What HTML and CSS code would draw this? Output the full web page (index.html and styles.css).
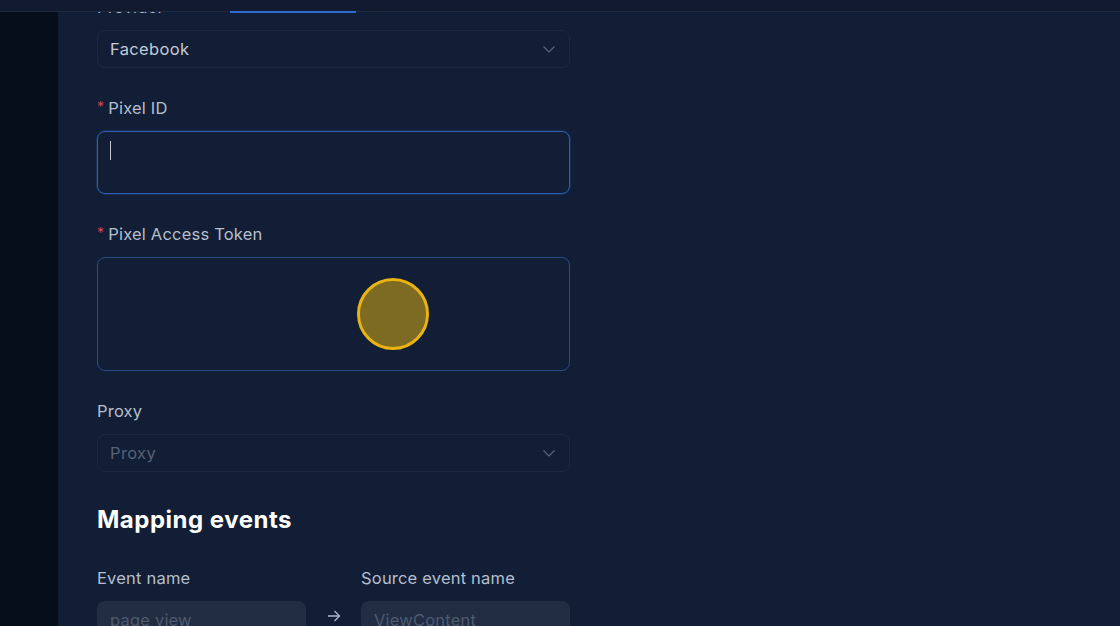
FILE: index.html
```html
<!DOCTYPE html>
<html lang="en">
<head>
<meta charset="utf-8">
<title>Pixel settings</title>
<link rel="stylesheet" href="styles.css">
</head>
<body>
<div class="app">
  <header class="topbar">
    <div class="tabs">
      <span class="tab"></span>
      <span class="tab active"></span>
    </div>
  </header>
  <div class="body">
    <aside class="sidebar"></aside>
    <main class="main">
      <form class="form">
        <div class="field">
          <label class="label">Provider</label>
          <div class="select">
            <span class="value">Facebook</span>
            <svg class="chev" viewBox="0 0 12 7" width="12" height="7"><polyline points="0.5,0.5 6,6 11.5,0.5" /></svg>
          </div>
        </div>
        <div class="field">
          <label class="label"><span class="req">*</span>Pixel ID</label>
          <div class="input focus"><span class="caret"></span></div>
        </div>
        <div class="field">
          <label class="label"><span class="req">*</span>Pixel Access Token</label>
          <div class="textarea">
            <span class="click"></span>
          </div>
        </div>
        <div class="field">
          <label class="label">Proxy</label>
          <div class="select">
            <span class="value placeholder">Proxy</span>
            <svg class="chev" viewBox="0 0 12 7" width="12" height="7"><polyline points="0.5,0.5 6,6 11.5,0.5" /></svg>
          </div>
        </div>
        <h2 class="heading">Mapping events</h2>
        <div class="mapping">
          <label class="label">Event name</label>
          <span></span>
          <label class="label">Source event name</label>
          <div class="filled">page view</div>
          <div class="arrow">
            <svg viewBox="0 0 14 12" width="14" height="12"><path d="M1 6 H12.5 M7.5 1 L12.5 6 L7.5 11" /></svg>
          </div>
          <div class="filled">ViewContent</div>
        </div>
      </form>
    </main>
  </div>
</div>
</body>
</html>
```
FILE: styles.css
```css
* { box-sizing: border-box; }
html, body { margin: 0; padding: 0; }
body {
  background: #121e36;
  font-family: "Inter", "Open Sans", sans-serif;
  color: #b9c1ce;
}
.app {
  width: 1120px;
  height: 626px;
  overflow: hidden;
  display: grid;
  grid-template-rows: 12px 1fr;
}
.topbar {
  background: #111a2e;
  border-bottom: 1px solid #1e2a41;
  position: relative;
  z-index: 2;
}
.tabs {
  display: flex;
  height: 100%;
  padding-left: 230px;
}
.tab.active {
  width: 126px;
  height: 13px;
  border-bottom: 2px solid #2d6bd1;
}
.body {
  display: grid;
  grid-template-columns: 59px 1fr;
  min-height: 0;
}
.sidebar {
  background: #060d1b;
  border-right: 1px solid #101a2c;
}
.main {
  overflow: hidden;
  padding-left: 38px;
}
.form {
  width: 473px;
  margin-top: -16px;
}
.field { margin-bottom: 29px; }
.label {
  display: block;
  font-size: 16.5px;
  line-height: 22px;
  height: 22px;
  margin-bottom: 12px;
  color: #b6bfcd;
  letter-spacing: 0.2px;
}
.req {
  color: #d9434f;
  font-size: 14px;
  line-height: 0;
  margin-right: 4px;
  vertical-align: 2px;
}
.select {
  height: 38px;
  border: 1px solid #1c2840;
  border-radius: 8px;
  display: flex;
  align-items: center;
  justify-content: space-between;
  padding: 0 14px 0 12px;
}
.value {
  font-size: 16.5px;
  color: #c4cbd7;
  letter-spacing: 0.35px;
}
.value.placeholder { color: #566275; }
.chev polyline {
  fill: none;
  stroke: #5b687d;
  stroke-width: 1.1;
}
.input {
  height: 63px;
  border-radius: 8px;
  border: 1px solid #2c5fb3;
  box-shadow: 0 0 0 1px rgba(44, 95, 179, 0.25);
  padding: 9px 12px;
}
.caret {
  display: block;
  width: 1px;
  height: 19px;
  background: #c3cad6;
}
.textarea {
  position: relative;
  height: 114px;
  border-radius: 8px;
  border: 1px solid #2b4c80;
}
.click {
  position: absolute;
  left: 259px;
  top: 20px;
  width: 72px;
  height: 72px;
  border-radius: 50%;
  border: 3px solid #e9b312;
  background: #7d6b23;
}
.heading {
  margin: 33px 0 32px;
  font-size: 24px;
  line-height: 30px;
  font-weight: 700;
  color: #ffffff;
  letter-spacing: 0.5px;
}
.mapping {
  display: grid;
  grid-template-columns: 209px 55px 209px;
}
.filled {
  height: 38px;
  border-radius: 8px;
  background: #222d43;
  color: #4e5a6d;
  font-size: 16.5px;
  display: flex;
  align-items: center;
  padding: 0 13px;
  letter-spacing: 0.2px;
}
.arrow {
  display: flex;
  justify-content: center;
  align-items: center;
  padding-bottom: 9px;
}
.arrow path {
  fill: none;
  stroke: #aeb7c6;
  stroke-width: 1.3;
}
```
